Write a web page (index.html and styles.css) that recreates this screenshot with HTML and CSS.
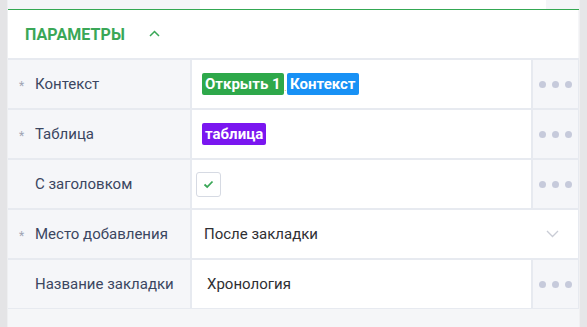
FILE: index.html
```html
<!DOCTYPE html>
<html lang="ru">
<head>
<meta charset="utf-8">
<link rel="stylesheet" href="styles.css">
</head>
<body>
<div class="page">
  <div class="gutter"></div>
  <div class="main">
    <div class="top-strip">
      <div class="ts-label"></div>
      <div class="ts-value"></div>
      <div class="ts-side"></div>
    </div>
    <div class="section">
      <div class="section-head">
        <span class="section-title">ПАРАМЕТРЫ</span>
        <svg class="chev-up" width="11" height="7" viewBox="0 0 11 7"><path d="M1 6 L5.5 1.5 L10 6" fill="none" stroke="#3aa757" stroke-width="1.5"/></svg>
      </div>
      <div class="grid">
        <div class="label"><span class="star">*</span>Контекст</div>
        <div class="value tags">
          <span class="tag green">Открыть 1</span><span class="sep">.</span><span class="tag blue">Контекст</span>
        </div>
        <div class="dots"><i></i><i></i><i></i></div>

        <div class="label"><span class="star">*</span>Таблица</div>
        <div class="value tags">
          <span class="tag purple">таблица</span>
        </div>
        <div class="dots"><i></i><i></i><i></i></div>

        <div class="label"><span class="star"></span>С заголовком</div>
        <div class="value check-cell">
          <span class="checkbox">
            <svg width="11" height="9" viewBox="0 0 11 9"><path d="M1.5 4.5 L4.2 7 L9.5 1.5" fill="none" stroke="#3aa757" stroke-width="1.8"/></svg>
          </span>
        </div>
        <div class="dots"><i></i><i></i><i></i></div>

        <div class="label"><span class="star">*</span>Место добавления</div>
        <div class="value select">
          <span class="text">После закладки</span>
          <svg class="chev-down" width="13" height="8" viewBox="0 0 13 8"><path d="M1 1 L6.5 6.5 L12 1" fill="none" stroke="#c9ccd5" stroke-width="1.3"/></svg>
        </div>

        <div class="label"><span class="star"></span>Название закладки</div>
        <div class="value input"><span class="text">Хронология</span></div>
        <div class="dots"><i></i><i></i><i></i></div>
      </div>
    </div>
  </div>
  <div class="scroll"></div>
</div>
</body>
</html>
```

FILE: styles.css
```css
html, body {
  margin: 0;
  padding: 0;
}
body {
  width: 587px;
  height: 327px;
  overflow: hidden;
  background: #f5f6f8;
  font-family: Roboto, "Liberation Sans", sans-serif;
  font-size: 15px;
}
.page {
  display: flex;
  height: 327px;
}
.gutter {
  width: 7px;
  background: #e4e4e6;
  border-right: 1px solid #eeeff1;
}
.scroll {
  width: 7px;
  background: #e6e6e8;
  border-left: 1px solid #f0f0f2;
}
.main {
  flex: 1;
  display: flex;
  flex-direction: column;
  background: #f5f6f8;
}
.top-strip {
  display: flex;
  height: 9px;
}
.ts-label {
  width: 192px;
  background: #f4f5f8;
}
.ts-value {
  width: 346px;
  background: #ffffff;
}
.ts-side {
  flex: 1;
  background: #f4f5f8;
}
.section {
  border-top: 1px solid #34a853;
}
.section-head {
  height: 48px;
  background: #ffffff;
  display: flex;
  align-items: center;
  padding-left: 17px;
  margin-right: 1px;
}
.section-title {
  color: #3aa757;
  font-weight: 700;
  font-size: 16px;
  letter-spacing: 0.1px;
}
.chev-up {
  margin-left: 24px;
  margin-top: -2px;
}
.grid {
  display: grid;
  grid-template-columns: 182px 1fr 45px;
  grid-auto-rows: 48px;
  gap: 2px;
  padding: 2px 1px 1px 0;
  background: #e7eaf0;
}
.label {
  background: #f5f6f9;
  color: #3b4661;
  display: flex;
  align-items: center;
  padding-left: 11px;
}
.star {
  display: inline-block;
  width: 16px;
  color: #a0a5b4;
  font-size: 12px;
  margin-top: 3px;
}
.value {
  background: #ffffff;
  display: flex;
  align-items: center;
}
.tags {
  padding-left: 10px;
}
.tag {
  display: inline-block;
  color: #ffffff;
  font-weight: 700;
  font-size: 15px;
  line-height: 22px;
  height: 22px;
  padding: 0 3px;
  border-radius: 2px;
}
.tag.green { background: #2ea84a; }
.tag.blue { background: #1891f5; }
.tag.purple { background: #7a16f0; }
.sep {
  color: #9aa52a;
  font-size: 9px;
  margin: 8px 0.5px 0;
}
.check-cell {
  padding-left: 4px;
}
.checkbox {
  width: 23px;
  height: 23px;
  border: 1px solid #d6dae3;
  border-radius: 3px;
  display: flex;
  align-items: center;
  justify-content: center;
  background: #ffffff;
}
.select {
  grid-column: 2 / span 2;
  padding-left: 12px;
  padding-right: 19px;
  justify-content: space-between;
  color: #2f2f33;
}
.input {
  padding-left: 15px;
  color: #2f2f33;
}
.dots {
  background: #f5f6f9;
  display: flex;
  align-items: center;
  justify-content: center;
  gap: 6px;
}
.dots i {
  width: 7px;
  height: 7px;
  border-radius: 50%;
  background: #c6cadb;
}
```
